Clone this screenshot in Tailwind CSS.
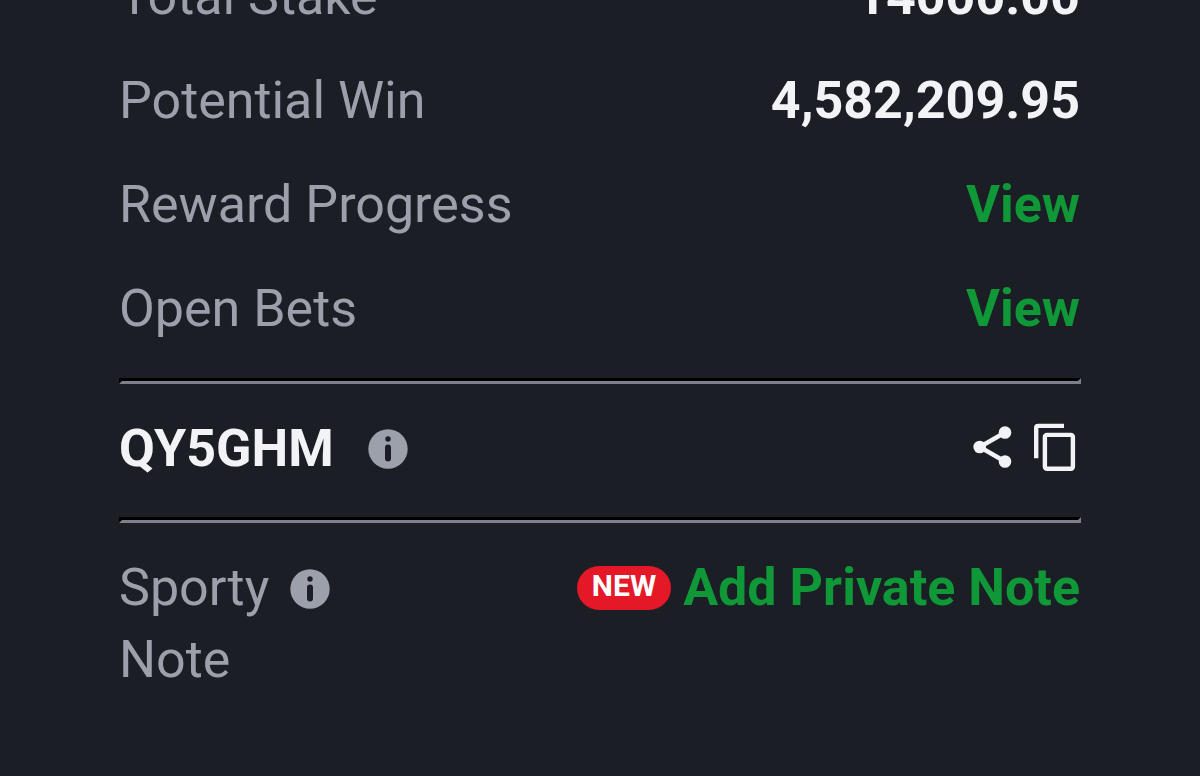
<!DOCTYPE html>
<html lang="en">
<head>
    <meta charset="utf-8"/>
    <meta content="width=device-width, initial-scale=1.0" name="viewport"/>
    <title>Bet Details</title>
    <script src="https://cdn.jsdelivr.net/npm/@tailwindcss/browser@4"></script>
</head>
<body class="bg-[#1b1e25] font-['Roboto',sans-serif] overflow-x-hidden">
    <main class="pl-[119px] pr-[120px] -mt-[39px] text-[52px] leading-[72px] text-[#9ca0ab]">
        <dl class="space-y-8">
            <div class="flex justify-between">
                <dt>Total Stake</dt>
                <dd class="font-bold text-[#f2f3f6]">14000.00</dd>
            </div>
            <div class="flex justify-between">
                <dt>Potential Win</dt>
                <dd class="font-bold text-[#f2f3f6]">4,582,209.95</dd>
            </div>
            <div class="flex justify-between">
                <dt>Reward Progress</dt>
                <dd><a href="#" class="font-bold text-[#109737]">View</a></dd>
            </div>
            <div class="flex justify-between">
                <dt>Open Bets</dt>
                <dd><a href="#" class="font-bold text-[#109737]">View</a></dd>
            </div>
        </dl>
        <hr class="mt-[33px] -mr-px border-3 border-t-black border-l-black border-r-[#7c808c] border-b-[#7c808c]"/>
        <section class="flex items-center justify-between pt-[29px] pb-8">
            <div class="flex items-center gap-[34px]">
                <span class="font-bold text-[#f2f3f6]">QY5GHM</span>
                <button type="button" aria-label="About booking code">
                    <svg class="block size-10" viewBox="0 0 40 40">
                        <circle cx="20" cy="20" r="19.7" fill="#9ca0ab"/>
                        <circle cx="20" cy="10" r="2.7" fill="#1b1e25"/>
                        <rect x="17" y="15.5" width="6" height="17" rx="3" fill="#1b1e25"/>
                    </svg>
                </button>
            </div>
            <div class="flex items-center gap-5 pr-1 pb-1">
                <button type="button" aria-label="Share">
                    <svg class="block w-10 h-12" viewBox="0 0 40 48" fill="#f2f3f6">
                        <path d="M33 9.5 7.7 24 33 38.5" fill="none" stroke="#f2f3f6" stroke-width="4.4"/>
                        <circle cx="33" cy="9.5" r="6.3"/>
                        <circle cx="7.7" cy="24" r="6.3"/>
                        <circle cx="33" cy="38.5" r="6.3"/>
                    </svg>
                </button>
                <button type="button" aria-label="Copy">
                    <svg class="block w-11 h-12" viewBox="0 0 44 48" fill="none" stroke="#f2f3f6" stroke-width="4.4">
                        <path d="M4.2 35.2V4.9q0-2 2-2H32"/>
                        <rect x="12.9" y="11.9" width="28" height="33.8" rx="2"/>
                    </svg>
                </button>
            </div>
        </section>
        <hr class="-mr-px border-3 border-t-black border-l-black border-r-[#7c808c] border-b-[#7c808c]"/>
        <section class="flex justify-between pt-[29px]">
            <div class="flex items-start">
                <span class="w-[171px]">Sporty Note</span>
                <button type="button" class="mt-[17px]" aria-label="About Sporty Note">
                    <svg class="block size-10" viewBox="0 0 40 40">
                        <circle cx="20" cy="20" r="19.7" fill="#9ca0ab"/>
                        <circle cx="20" cy="10" r="2.7" fill="#1b1e25"/>
                        <rect x="17" y="15.5" width="6" height="17" rx="3" fill="#1b1e25"/>
                    </svg>
                </button>
            </div>
            <div class="flex items-center h-[72px]">
                <span class="mr-3 rounded-full bg-[#e41827] px-[15px] pb-1 text-[30px] leading-[40px] font-bold text-white">NEW</span>
                <a href="#" class="font-bold text-[#109737]">Add Private Note</a>
            </div>
        </section>
    </main>
</body>
</html>
